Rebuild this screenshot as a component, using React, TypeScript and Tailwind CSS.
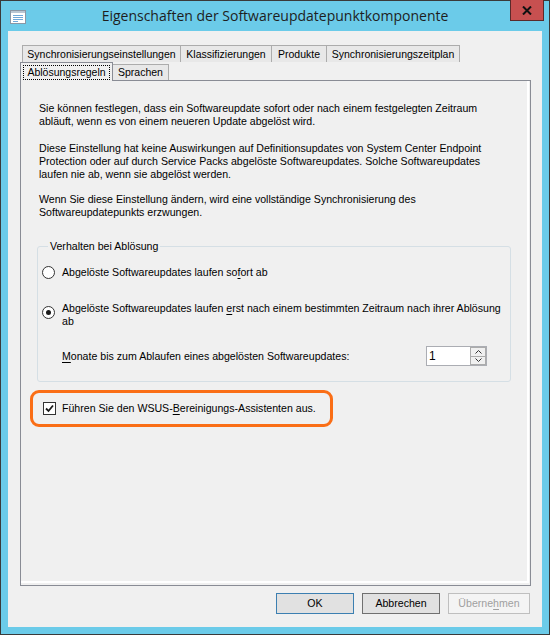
import React from "react";

const font = "font-['Liberation_Sans',Arial,sans-serif]";

const Radio = ({ checked }: { checked?: boolean }) => (
  <span className="flex items-center justify-center w-[13px] h-[13px] rounded-full border border-[#333333] bg-white shrink-0">
    {checked && <span className="w-[5px] h-[5px] rounded-full bg-[#1a1a1a]" />}
  </span>
);

const Checkbox = () => (
  <span className="flex items-center justify-center w-[13px] h-[13px] border border-[#333333] bg-white shrink-0">
    <svg width="9" height="9" viewBox="0 0 9 9">
      <path d="M1 4.5 L3.5 7 L8 1.5" fill="none" stroke="#1a1a1a" strokeWidth="1.8" />
    </svg>
  </span>
);

const BackTab = ({ label, w }: { label: string; w: string }) => (
  <div className={`${w} h-[17px] flex items-center justify-center bg-[#e8e8e8] border-t border-r border-[#acacac] first:border-l whitespace-nowrap text-[10.5px]`}>
    {label}
  </div>
);

const App = () => {
  return (
    <div className={`w-[550px] h-[635px] flex flex-col bg-[#6bcbe9] border border-[#3a3a3a] ${font} text-[10.6px] leading-[13px] text-black`}>
      {/* title bar */}
      <div className="h-[30px] grid grid-cols-[1fr_auto_1fr] items-start">
        <div className="ml-[9px] mt-[9px]">
          <svg width="16" height="14" viewBox="0 0 16 14">
            <rect x="0.5" y="0.5" width="15" height="13" fill="#ffffff" stroke="#8a97a5" />
            <rect x="1" y="1" width="14" height="2" fill="#b9c6d3" />
            <rect x="3" y="5" width="10" height="1" fill="#6fa8d8" />
            <rect x="3" y="7" width="10" height="1" fill="#6fa8d8" />
            <rect x="3" y="9" width="10" height="1" fill="#6fa8d8" />
            <rect x="3" y="11" width="5" height="1" fill="#6fa8d8" />
          </svg>
        </div>
        <div className="mt-[5px] text-[14px] leading-[20px] text-[#1e1e1e] font-['Open_Sans',sans-serif] whitespace-nowrap">
          Eigenschaften der Softwareupdatepunktkomponente
        </div>
        <div className="justify-self-end mr-[5px] -mt-px w-[34px] h-[21px] bg-[#c75050] border border-[#5a2a2a] border-t-0 flex items-center justify-center">
          <svg width="10" height="9" viewBox="0 0 10 9">
            <path d="M1 0.5 L9 8.5 M9 0.5 L1 8.5" stroke="#111111" strokeWidth="2" />
          </svg>
        </div>
      </div>

      {/* client area */}
      <div className="flex-1 flex flex-col bg-[#f0f0f0] ml-[7px] mr-[7px] mb-[7px]">
        <div className="flex flex-col pl-[12px] pr-[11px] pt-[14px]">
          {/* back row of tabs */}
          <div className="flex ml-[2px]">
            <BackTab label="Synchronisierungseinstellungen" w="w-[159px]" />
            <BackTab label="Klassifizierungen" w="w-[91px]" />
            <BackTab label="Produkte" w="w-[55px]" />
            <BackTab label="Synchronisierungszeitplan" w="w-[133px]" />
          </div>
          {/* front row of tabs */}
          <div className="flex items-end h-[18px] text-[10.5px]">
            <div className="relative z-10 w-[93px] h-[19px] -mb-px bg-[#f0f0f0] border-t border-l border-r border-[#898c95] flex items-start justify-center pt-[2px]">
              <span className="border border-dotted border-black px-[3px] leading-[13px] whitespace-nowrap">Ablösungsregeln</span>
            </div>
            <div className="w-[56px] h-[16px] bg-[#e8e8e8] border-t border-r border-[#acacac] flex items-center justify-center">
              Sprachen
            </div>
          </div>

          {/* tab page */}
          <div className="h-[506px] border border-[#898c95] flex">
            <div className="flex-1 min-w-0 flex flex-col mr-px mb-[2px] border-r-2 border-b-2 border-white pl-[16px] pr-[16px] pt-[21px]">
              <div className="pl-[2px] whitespace-nowrap">
                <p>Sie können festlegen, dass ein Softwareupdate sofort oder nach einem festgelegten Zeitraum</p>
                <p>abläuft, wenn es von einem neueren Update abgelöst wird.</p>
                <p className="mt-[14px]">Diese Einstellung hat keine Auswirkungen auf Definitionsupdates von System Center Endpoint</p>
                <p>Protection oder auf durch Service Packs abgelöste Softwareupdates. Solche Softwareupdates</p>
                <p>laufen nie ab, wenn sie abgelöst werden.</p>
                <p className="mt-[12px]">Wenn Sie diese Einstellung ändern, wird eine vollständige Synchronisierung des</p>
                <p>Softwareupdatepunkts erzwungen.</p>
              </div>

              {/* group box */}
              <fieldset className="mt-[21px] min-w-0 h-[142px] border border-[#d5dfe5] rounded-[3px] pl-[4px] pr-[23px] flex flex-col">
                <legend className="ml-[6px] px-[2px]">Verhalten bei Ablösung</legend>
                <div className="flex items-center gap-[7px] mt-[13px]">
                  <Radio />
                  <span className="whitespace-nowrap">
                    Abgelöste Softwareupdates laufen so<u className="underline-offset-2">f</u>ort ab
                  </span>
                </div>
                <div className="flex items-start gap-[7px] mt-[23px]">
                  <span className="mt-[4px]">
                    <Radio checked />
                  </span>
                  <span className="whitespace-nowrap">
                    Abgelöste Softwareupdates laufen <u className="underline-offset-2">e</u>rst nach einem bestimmten Zeitraum nach ihrer Ablösung
                    <br />
                    ab
                  </span>
                </div>
                <div className="flex items-center justify-between mt-[18px] pl-[20px]">
                  <span className="whitespace-nowrap">
                    <u className="underline-offset-2">M</u>onate bis zum Ablaufen eines abgelösten Softwareupdates:
                  </span>
                  <div className="w-[61px] h-[20px] border border-[#abadb3] bg-white flex">
                    <span className="flex-1 pl-[2px] pt-[3px] text-[12px] leading-[13px]">1</span>
                    <div className="w-[16px] flex flex-col">
                      <div className="flex-1 border border-[#acacac] bg-[#f0f0f0] flex items-center justify-center">
                        <svg width="7" height="4" viewBox="0 0 7 4">
                          <path d="M0.5 3.5 L3.5 0.5 L6.5 3.5" fill="none" stroke="#333" strokeWidth="1" />
                        </svg>
                      </div>
                      <div className="flex-1 border border-t-0 border-[#acacac] bg-[#f0f0f0] flex items-center justify-center">
                        <svg width="7" height="4" viewBox="0 0 7 4">
                          <path d="M0.5 0.5 L3.5 3.5 L6.5 0.5" fill="none" stroke="#333" strokeWidth="1" />
                        </svg>
                      </div>
                    </div>
                  </div>
                </div>
              </fieldset>

              {/* highlighted checkbox */}
              <div className="mt-[8px] -ml-[7px] w-[303px] h-[37px] border-[3px] border-[#fa6e16] rounded-[9px] flex items-center gap-[6px] pl-[10px]">
                <Checkbox />
                <span className="whitespace-nowrap">
                  Führen Sie den WSUS-<u className="underline-offset-2">B</u>ereinigungs-Assistenten aus.
                </span>
              </div>
            </div>
          </div>
        </div>

        {/* buttons */}
        <div className="flex justify-end gap-[8px] mt-[7px] pr-[12px]">
          <button className="w-[78px] h-[21px] bg-[#e1e1e1] border border-[#3c7fb1]">OK</button>
          <button className="w-[78px] h-[21px] bg-[#e1e1e1] border border-[#707070]">Abbrechen</button>
          <button className="w-[82px] h-[21px] bg-[#f4f4f4] border border-[#bfbfbf] text-[#a0a0a0]">
            Überne<u className="underline-offset-2">h</u>men
          </button>
        </div>
      </div>
    </div>
  );
};

export default App;
